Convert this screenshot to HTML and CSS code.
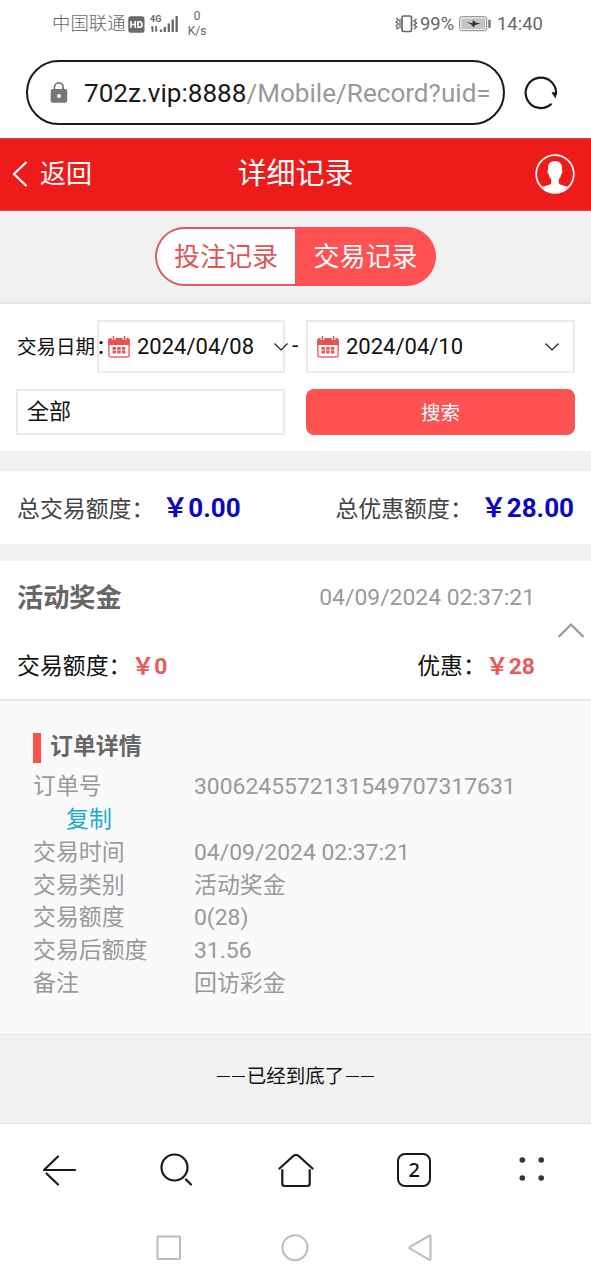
FILE: index.html
```
<!DOCTYPE html>
<html lang="zh-CN">
<head>
<meta charset="utf-8">
<title>详细记录</title>
<link rel="stylesheet" href="styles.css">
</head>
<body>
<div class="status">
  <span class="carrier">中国联通</span>
  <svg class="hd" width="17" height="17" viewBox="0 0 17 17"><rect x=".3" y=".3" width="16.2" height="16.4" rx="2.5" fill="#6a6a6a"/><path d="M3 5v7M7.2 5v7M3 8.5h4.2M10 5.8v5.4h1.6q2.4 0 2.4-2.7T11.600 5.800z" fill="none" stroke="#fff" stroke-width="1.6"/></svg>
  <div class="network"><span class="gen">4G</span>
    <svg width="28" height="18" viewBox="0 0 28 18"><g stroke="#666" stroke-width="1.700"><path d="M2.500 11.500v5.500M6 11v5.500" /><path d="M11 14.500v2.500M14.800 12v5M18.800 8.500v8.500M22.700 4.500v12.500M26.700 1v16" stroke-width="2.300"/></g><path d="M.5 13.200 2.600 10.600v2.600zM8 14.400 5.900 17v-2.600z" fill="#666"/></svg>
  </div>
  <div class="speed"><span>0</span><span>K/s</span></div>
  <svg class="vibrate" width="24" height="18" viewBox="0 0 24 18" fill="none" stroke="#666"><rect x="7" y="1" width="9.500" height="15.500" rx="1.500" stroke-width="1.700"/><path d="M1 3l2.500 2L1 7l2.500 2L1 11l2.500 2L1 14M5 4v9" stroke-width="1.200"/><path d="M21.500 4 19 6l2.500 2-2.500 2 2.500 2-2.500 2" stroke-width="1.500"/></svg>
  <span class="percent">99%</span>
  <svg class="battery" width="32" height="16" viewBox="0 0 32 16"><rect x=".7" y=".7" width="27" height="14" rx="2" fill="#eee" stroke="#888"/><rect x="2.500" y="2.500" width="23.500" height="10.500" fill="#c4c4c4"/><path d="M7.500 6 13.500 7.200 14 4l2.500 2.500 5 .8-5.500 1.700L14.500 11.500 12.500 8.800z" fill="#333"/><rect x="29.200" y="3.500" width="2.500" height="8.500" rx="1" fill="#777"/></svg>
  <span class="clock">14:40</span>
</div>
<div class="address">
  <div class="pill">
    <svg width="18" height="23" viewBox="0 0 18 23"><path d="M4.500 10V6.200a4.300 4.300 0 0 1 8.600 0V10" fill="none" stroke="#777" stroke-width="1.800"/><rect x=".7" y="8" width="16.500" height="13.700" rx="2" fill="#777"/><circle cx="9" cy="15" r="2.100" fill="#fff"/></svg>
    <div class="url">702z.vip:8888<span>/Mobile/Record?uid=</span></div>
  </div>
  <svg class="reload" width="34" height="34" viewBox="0 0 34 34" fill="none" stroke="#1a1a1a"><path d="M26.800 28.300A15.200 15.200 0 1 1 32 18" stroke-width="2.200" stroke-linecap="round"/><path d="M28 16.500 31.300 21l1.200-5" fill="#1a1a1a" stroke-width="1.200"/></svg>
</div>
<header class="header">
  <div class="back"><svg width="16" height="28" viewBox="0 0 16 28"><path d="M14.500 2 2 14l12.500 12" fill="none" stroke="#fff" stroke-width="2.300"/></svg><span>返回</span></div>
  <h1>详细记录</h1>
  <svg class="avatar" width="40" height="40" viewBox="0 0 40 40"><circle cx="20" cy="20" r="18.800" fill="none" stroke="#fff" stroke-width="1.700"/><path d="M20 7.200c5 0 7.500 2.500 7 8.500.9 1.400.5 3.500-.7 4.500-.5 2.300-1.200 3.800-2.500 5v4.300c2 2 6.500 2.300 9.700 3.500Q28 39 20 39T6.500 33c3.200-1.200 7.700-1.500 9.700-3.500v-4.300c-1.300-1.200-2-2.700-2.500-5-1.200-1-1.600-3.100-.7-4.500-.5-6 2-8.500 7-8.500z" fill="#fff"/></svg>
</header>
<nav class="tabs"><span class="tab">投注记录</span><span class="tab active">交易记录</span></nav>
<section class="filter">
  <div class="dates">
    <span class="date-label">交易日期<b>:</b></span>
    <div class="date from"><svg class="cal" width="22" height="22" viewBox="0 0 22 22"><rect x=".9" y="3" width="20.200" height="18" rx="2" fill="#fff" stroke="#ec6a6a" stroke-width="1.500"/><path d="M.3 9V4q0-2 2-2h17.400q2 0 2 2v5z" fill="#e85353"/><path d="M5.500 0v4M16.500 0v4" stroke="#fff" stroke-width="3.600"/><path d="M5.500 0v4M16.500 0v4" stroke="#e85353" stroke-width="1.500"/><path d="M4.500 12.300h13M4.500 16h13" stroke="#e85353" stroke-width="2.800" stroke-dasharray="3.500 1.150"/></svg><span>2024/04/08</span><svg class="down" width="16" height="10" viewBox="0 0 16 10"><path d="M1.500 1.500 8 8l6.500-6.500" fill="none" stroke="#222" stroke-width="1.200"/></svg></div>
    <span class="dash">-</span>
    <div class="date to"><svg class="cal" width="22" height="22" viewBox="0 0 22 22"><rect x=".9" y="3" width="20.200" height="18" rx="2" fill="#fff" stroke="#ec6a6a" stroke-width="1.500"/><path d="M.3 9V4q0-2 2-2h17.400q2 0 2 2v5z" fill="#e85353"/><path d="M5.500 0v4M16.500 0v4" stroke="#fff" stroke-width="3.600"/><path d="M5.500 0v4M16.500 0v4" stroke="#e85353" stroke-width="1.500"/><path d="M4.500 12.300h13M4.500 16h13" stroke="#e85353" stroke-width="2.800" stroke-dasharray="3.500 1.150"/></svg><span>2024/04/10</span><svg class="down" width="16" height="10" viewBox="0 0 16 10"><path d="M1.500 1.500 8 8l6.500-6.500" fill="none" stroke="#222" stroke-width="1.200"/></svg></div>
  </div>
  <div class="search"><div class="kind">全部</div><div class="submit">搜索</div></div>
</section>
<section class="summary">
  <div>总交易额度：<b>￥0.00</b></div>
  <div>总优惠额度：<b>￥28.00</b></div>
</section>
<section class="record">
  <div class="record-main">
    <div class="line"><h2>活动奖金</h2><time>04/09/2024 02:37:21</time></div>
    <div class="line amounts"><div>交易额度：<b>￥0</b></div><div>优惠：<b>￥28</b></div></div>
  </div>
  <svg class="up" width="28" height="17" viewBox="0 0 28 17"><path d="M1.500 15 14 2.500 26.500 15" fill="none" stroke="#999" stroke-width="2.200"/></svg>
</section>
<section class="detail">
  <h3>订单详情</h3>
  <dl>
    <dt>订单号<span class="copy">复制</span></dt><dd>3006245572131549707317631</dd>
    <dt>交易时间</dt><dd>04/09/2024 02:37:21</dd>
    <dt>交易类别</dt><dd>活动奖金</dd>
    <dt>交易额度</dt><dd>0(28)</dd>
    <dt>交易后额度</dt><dd>31.56</dd>
    <dt>备注</dt><dd>回访彩金</dd>
  </dl>
</section>
<div class="end"><i></i><i></i><span>已经到底了</span><i></i><i></i></div>
<nav class="toolbar">
  <svg width="36" height="36" viewBox="0 0 36 36"><path d="M17 4.500 3 18h31M5.500 21.500 17 32.500" /></svg>
  <svg class="find" width="36" height="36" viewBox="0 0 36 36"><circle cx="16.500" cy="15.500" r="13"/><path d="m28 27.500 5 5"/></svg>
  <svg class="home" width="36" height="36" viewBox="0 0 36 36"><path d="M1.500 16.500 15 4.200q3-2.700 6 0l13.500 12.300M4.300 18v13.500q0 2.500 2.500 2.500h22.400q2.500 0 2.500-2.500V18"/></svg>
  <div class="count">2</div>
  <svg width="36" height="36" viewBox="0 0 36 36"><g fill="#333" stroke="none"><circle cx="8.300" cy="8" r="2.800"/><circle cx="27.200" cy="8" r="2.800"/><circle cx="8.300" cy="26" r="2.800"/><circle cx="27.200" cy="26" r="2.800"/></g></svg>
</nav>
<div class="system">
  <svg width="28" height="28" viewBox="0 0 28 28"><rect x="2.500" y="2.500" width="22.500" height="22.500" rx=".8"/></svg>
  <svg width="28" height="28" viewBox="0 0 28 28"><circle cx="14" cy="13.700" r="12.500"/></svg>
  <svg width="28" height="28" viewBox="0 0 28 28"><path d="M23 1.800q1.500-.8 1.500.8v22.200q0 1.600-1.500.8L4 14.500q-1.300-.8 0-1.600z"/></svg>
</div>
</body>
</html>
```

FILE: styles.css
```
* { box-sizing: border-box; }
body { margin: 0; width: 591px; height: 1280px; overflow: hidden; background: #fff; color: #111; font: 22.9px/1 Roboto, "Noto Sans CJK SC", sans-serif; white-space: nowrap; }
svg { display: block; flex: none; }
h1, h2, h3, dl, dd { margin: 0; }

.status { display: flex; align-items: center; height: 48px; padding-left: 52px; color: #666; font-size: 18.4px; font-weight: 300; }
.carrier { width: 76px; padding-top: 1px; }
.network { display: flex; flex-direction: column; width: 28px; margin-left: 5px; }
.network svg { margin-top: -9px; }
.gen { font-size: 9px; line-height: 9px; font-weight: 700; }
.speed { display: flex; flex-direction: column; align-items: center; width: 20px; margin-left: 9px; font-size: 12px; line-height: 15px; font-weight: 400; }
.vibrate { margin-left: 188px; }
.percent, .clock { font-weight: 400; }
.percent { width: 36px; margin-left: 1px; }
.battery { margin-left: 3px; }
.clock { margin-left: 6px; }

.address { display: flex; align-items: center; height: 90px; padding: 0 0 1px 26px; }
.pill { display: flex; align-items: center; width: 479px; height: 65px; padding-left: 22px; border: 2.5px solid #1a1a1a; border-radius: 33px; }
.url { margin-left: 16px; padding-top: 2px; font-size: 26.1px; color: #1a1a1a; }
.url span { color: #999; }
.reload { margin-left: 19px; }

.header { display: grid; grid-template-columns: 1fr auto 1fr; align-items: center; height: 73px; padding: 0 16px 1px 12px; color: #fff; background: #ed1b1a; border: solid #d94a48; border-width: 1px 0; }
.back { display: flex; align-items: center; gap: 12px; font-size: 26px; }
.header h1 { padding-top: 1px; font-size: 29px; font-weight: 400; margin-left: 4px; }
.avatar { justify-self: end; }

.tabs { display: flex; justify-content: center; height: 93px; padding-top: 16px; background: #f1f1f1; border-bottom: 2px solid #e5e5e5; }
.tab { width: 141px; height: 59px; border: 2px solid #d95c5f; border-right-width: 1px; border-radius: 30px 0 0 30px; background: #fff; color: #dd5558; font-size: 26px; line-height: 57px; text-align: center; }
.tab.active { width: 140px; padding-right: 2px; border-color: #fe5151; border-radius: 0 30px 30px 0; background: #fe5151; color: #fff; }

.filter { height: 147px; padding: 16px 16px 0; }
.dates { display: flex; align-items: center; height: 53px; }
.date-label { width: 81px; padding: 2px 0 0 1px; font-size: 19.5px; }
.date-label b { margin-left: 3px; font-size: 23px; line-height: 19px; font-weight: 500; }
.date { display: flex; align-items: center; height: 53px; padding-left: 9px; border: 2px solid #eaeaea; }
.date span { flex: 1; margin-left: 7px; padding-top: 1px; font-size: 22px; }
.from { width: 188px; }
.from .down { margin-right: -6px; }
.dash { width: 21px; padding-left: 7px; }
.to { width: 269px; }
.to .down { margin-right: 13px; }
.search { display: flex; justify-content: space-between; margin-top: 16px; }
.kind { width: 269px; height: 46px; padding-left: 9px; border: 2px solid #eaeaea; font-size: 22px; line-height: 42px; }
.submit { width: 269px; height: 46px; border-radius: 8px; background: #fe5151; color: #fff; font-size: 19.5px; line-height: 50px; text-align: center; }

.summary { display: flex; justify-content: space-between; align-items: center; height: 110px; padding: 2px 17px 0; border: solid #f1f1f1; border-width: 20px 0 17px; color: #444; }
.summary b { margin-left: 8px; color: #0a07c4; font-size: 26px; }

.record { display: flex; align-items: center; height: 140px; padding: 0 6px 0 17px; border-bottom: 2px solid #e8e8e8; }
.record-main { width: 518px; padding-top: 6px; }
.line { display: flex; justify-content: space-between; align-items: center; height: 69px; }
.line h2 { color: #666; font-size: 26.2px; }
.line time { color: #999; }
.line b { color: #e85b5c; }
.up { margin-left: auto; }

.detail { height: 333px; padding: 32px 33px 0; background: #fafafa; color: #999; }
.detail h3 { height: 30px; padding-left: 9px; border-left: 8px solid #fa5151; color: #666; font-size: 22.9px; line-height: 28px; }
.detail dl { display: grid; grid-template-columns: 161px auto; justify-content: start; margin-top: 8px; line-height: 32.85px; }
.copy { display: block; padding-left: 33px; color: #1ba9cf; }

.end { display: flex; justify-content: center; align-items: center; gap: 2px; height: 90px; padding-bottom: 5px; background: #f1f1f1; border: solid #e2e2e2; border-width: 1px 0; font-size: 19.5px; }
.end i { width: 13px; height: 1.500px; background: #111; }

.toolbar { display: flex; justify-content: space-between; padding: 28px 41px 0; height: 92px; fill: none; stroke: #1a1a1a; stroke-width: 2.200; stroke-linecap: round; stroke-linejoin: round; }
.find { margin: 0 2px 0 -2px; }
.home { margin: 0 1px 0 -1px; }
.count { width: 34px; height: 34px; margin-top: 1px; border: 2.200px solid #1a1a1a; border-radius: 8px; font: 500 20px/29px "Noto Sans", sans-serif; text-align: center; }
.system { display: flex; justify-content: space-between; padding: 18px 157px 0 155px; fill: none; stroke: #bbb; stroke-width: 2; }
```
